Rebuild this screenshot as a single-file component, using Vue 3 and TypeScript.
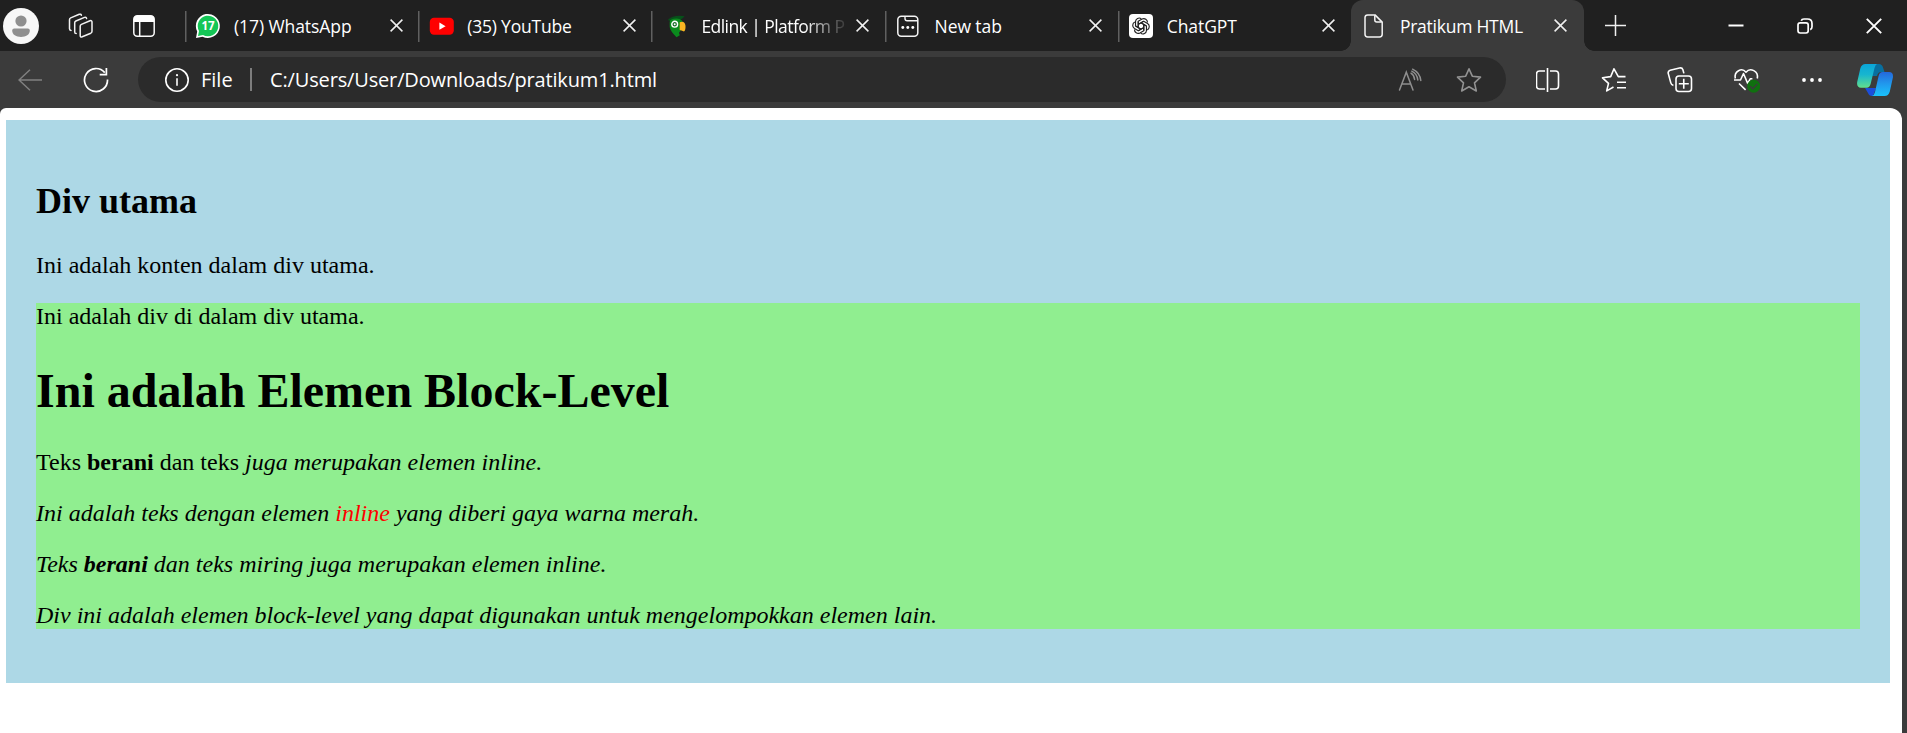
<script setup lang="ts">
interface Tab {
  id: string
  title: string
  cls: string
}

const tabs: Tab[] = [
  { id: 'whatsapp', title: '(17) WhatsApp', cls: 't-wa' },
  { id: 'youtube', title: '(35) YouTube', cls: 't-yt' },
  { id: 'edlink', title: 'Edlink | Platform P', cls: 't-ed' },
  { id: 'newtab', title: 'New tab', cls: 't-nt' },
  { id: 'chatgpt', title: 'ChatGPT', cls: 't-gpt' },
  { id: 'file', title: 'Pratikum HTML', cls: 't-file' },
]
const activeId = 'file'
const petals: number[] = [0, 60, 120, 180, 240, 300]
</script>

<template>
  <div class="browser">
    <header class="tabbar">
      <div class="lead">
        <svg class="avatar" viewBox="0 0 36 36" width="36" height="36">
          <circle cx="18" cy="18" r="18" fill="#f7f7f7" />
          <circle cx="18" cy="13" r="5.600" fill="#8f8f8f" />
          <path d="M9.2 22.600q0-2 2-2h13.600q2 0 2 2c0 4.300-4 6.400-8.800 6.400s-8.800-2.100-8.800-6.400z" fill="#8f8f8f" />
        </svg>
        <svg class="spaces" viewBox="0 0 26 26" width="26" height="26" fill="none" stroke="#f2f2f2" stroke-width="1.500" stroke-linejoin="round" stroke-linecap="round">
          <path d="M12.200 13.200q0-1.300 1.200-1.800l8.600-3.600q2-.7 2 1.300v9.200q0 1.300-1.200 1.900l-8.600 3.600q-2 .7-2-1.300z" />
          <path d="M8.200 20.600q-1.500 0-1.500-1.600v-9.200q0-1.300 1.200-1.800l8.600-3.600q1.800-.6 2.100 1.100" />
          <path d="M3 17.400q-1.500-.1-1.500-1.600V6.700q0-1.300 1.200-1.800l8.600-3.600q1.700-.6 2.100.9" />
        </svg>
        <svg class="vertical" viewBox="0 0 22 22" width="22" height="22">
          <rect x=".8" y=".8" width="20.400" height="20.400" rx="3.500" fill="none" stroke="#fafafa" stroke-width="1.500" />
          <path d="M.8 7V4Q.8.8 4 .8h14q3.200 0 3.200 3.200v3z" fill="#fff" />
          <path d="M6.700 7v14" stroke="#fafafa" stroke-width="1.500" />
        </svg>
      </div>

      <div v-for="tab in tabs" :key="tab.id" class="tab" :class="{ active: tab.id === activeId }">
        <svg v-if="tab.id === 'whatsapp'" class="fav" viewBox="0 0 24 24">
          <path d="M0 24l1.200-6.500A12 12 0 1 1 6.500 22.700z" fill="#fff" />
          <path d="M2 22l1-5A10.300 10.300 0 1 1 7 21z" fill="#14c656" />
          <text x="12" y="16.200" text-anchor="middle" font-family="Open Sans, sans-serif" font-size="11.500" font-weight="700" fill="#fff">17</text>
        </svg>
        <svg v-else-if="tab.id === 'youtube'" class="fav" viewBox="-0.8 0 24 24">
          <rect x="0" y="3.700" width="24" height="17" rx="4.200" fill="#f00" />
          <path d="M9.600 8.600v7.200l6.200-3.600z" fill="#fff" />
        </svg>
        <svg v-else-if="tab.id === 'edlink'" class="fav" viewBox="-0.7 0 24 24">
          <path d="M5 6Q11 .5 22 2.300L19 5l-8 3.500z" fill="#07501a" />
          <path d="M7 8Q7 4.800 14 4.500q6.500.3 6.500 6.500c0 3.500-3 5.500-4.200 8l.8 2.200-3.300 2Q7.500 17 7 13z" fill="#0a8a1d" />
          <path d="M17 8.200q5-2 5.800 3.500.2 4.600-1.500 5.800-3-1.500-4.300-1.500z" fill="#f9b522" />
          <circle cx="12" cy="10.200" r="2.900" fill="#176b27" stroke="#fff" stroke-width="1.400" />
          <circle cx="12" cy="10.200" r="1" fill="#fff" />
        </svg>
        <svg v-else-if="tab.id === 'newtab'" class="fav" viewBox="0 0 24 24">
          <rect x="1.800" y="2.300" width="20" height="20" rx="3.500" fill="none" stroke="#f4f4f4" stroke-width="1.500" />
          <path d="M9 2.300v2.200q0 2.200 2.200 2.200h10.600" fill="none" stroke="#f4f4f4" stroke-width="1.400" />
          <g fill="#fff"><circle cx="6.800" cy="13.500" r="1.450" /><circle cx="11.800" cy="13.500" r="1.450" /><circle cx="16.800" cy="13.500" r="1.450" /></g>
        </svg>
        <svg v-else-if="tab.id === 'chatgpt'" class="fav" viewBox="0 0 24 24">
          <rect width="24" height="24" rx="4" fill="#fff" />
          <g fill="none" stroke="#222" stroke-width="1.150" stroke-linejoin="round">
            <path
              v-for="angle in petals"
              :key="angle"
              :transform="`rotate(${angle} 12 12)`"
              d="M9.200 13.600V7.300l3.900-2.250a3.700 3.700 0 0 1 5.400 3.500M9.200 10.400l5.400-3.100"
            />
          </g>
        </svg>
        <svg v-else class="fav" viewBox="0.5 0 24 24" fill="none" stroke="#f4f4f4" stroke-width="1.500" stroke-linejoin="round">
          <path d="M6.200.9h7.300l7.200 7.200v12.200q0 2.700-2.700 2.700H6.200q-2.700 0-2.700-2.700V3.600Q3.500.9 6.200.9z" />
          <path d="M13.300 1.200v4.900q0 2 2 2h5" />
        </svg>
        <span class="title" :class="tab.cls">{{ tab.title }}</span>
        <svg class="x" viewBox="0 0 13 13" width="13" height="13">
          <path d="M.6.6l11.800 11.800M12.400.6L.6 12.400" stroke="#f0f0f0" stroke-width="1.500" />
        </svg>
      </div>

      <svg class="plus" viewBox="0 0 21 21" width="21" height="21">
        <path d="M10.500 0v21M0 10.500h21" stroke="#f0f0f0" stroke-width="1.500" />
      </svg>

      <div class="controls">
        <svg viewBox="0 0 16 16" width="16" height="16"><path d="M.5 7.500h15" stroke="#fff" stroke-width="2" /></svg>
        <svg viewBox="0 0 16 16" width="16" height="16" fill="none" stroke="#fff" stroke-width="1.700">
          <rect x="1" y="4.800" width="10.200" height="10.200" rx="2.200" />
          <path d="M4.300 2.800Q4.700 1 7 1h3.400q4.600 0 4.600 4.600v3.200q0 2.300-1.800 2.800" />
        </svg>
        <svg viewBox="0 0 16 16" width="16" height="16"><path d="M.8.800l14.400 14.400M15.200.8L.8 15.200" stroke="#fff" stroke-width="1.900" /></svg>
      </div>
    </header>

    <nav class="toolbar">
      <svg class="back" viewBox="0 0 24 22" width="24" height="22" fill="none" stroke="#818181" stroke-width="1.500">
        <path d="M12 .7L1 11l11 10.300M1 11h23" />
      </svg>
      <svg class="reload" viewBox="0 0 26 26" width="26" height="26" fill="none" stroke="#fff" stroke-width="1.700">
        <path d="M24.500 12.500A11.500 11.500 0 1 1 21.800 5.600" />
        <path d="M23.400 1v6.700h-6.700" />
      </svg>
      <div class="omnibox">
        <svg class="info" viewBox="0 0 24 24" width="24" height="24">
          <circle cx="12" cy="12" r="11.200" fill="none" stroke="#fff" stroke-width="1.600" />
          <circle cx="12" cy="7.200" r="1.100" fill="#fff" />
          <path d="M12 10.200v7.600" stroke="#fff" stroke-width="1.600" />
        </svg>
        <span class="scheme">File</span>
        <i class="bar"></i>
        <span class="url">C:/Users/User/Downloads/pratikum1.html</span>
        <svg class="aloud" viewBox="0 0 24 24" width="24" height="24" fill="none" stroke="#8f8f8f" stroke-width="1.500" stroke-linecap="round">
          <path d="M1.500 22L8.300 4.200 15 22M4 16h8.800" />
          <path d="M13 5.200q3.200 2 3.600 6.300M14.600 1.200q7.400 3.600 8.200 11.300" />
          <path d="M13.800 3.200q5.400 2.700 6 8.800" />
        </svg>
        <svg class="star" viewBox="0 0 26 26" width="26" height="26" fill="none" stroke="#929292" stroke-width="1.600" stroke-linejoin="round">
          <path d="M13 1.800l3.300 7.400 8.200.9-6 5.700 1.800 8.200-7.300-4.200L5.700 24l1.800-8.200-6-5.700 8.200-.9z" />
        </svg>
      </div>
      <div class="actions">
        <span class="cell">
          <svg viewBox="0.500 0 24 24" width="24" height="24" fill="none" stroke="#fff" stroke-width="1.600">
            <path d="M12 0v24M9.500 3H4Q1 3 1 6v12q0 3 3 3h5.500M14.500 3H20q3 0 3 3v12q0 3-3 3h-5.500" />
          </svg>
        </span>
        <span class="cell">
          <svg viewBox="0 0 26 26" width="26" height="26" fill="none" stroke="#fff" stroke-width="1.600" stroke-linejoin="round">
            <path d="M24.500 9.600h-7.200L13 1.800 9.700 9.600l-8.200 1.200 6 5.600-1.800 7.500 6.800-3.900M16 15.200h9M16 20.700h9" />
          </svg>
        </span>
        <span class="cell">
          <svg viewBox="0 0 26 26" width="26" height="26" fill="none" stroke="#fff" stroke-width="1.600" stroke-linejoin="round">
            <rect x="9" y="9" width="15.500" height="15.500" rx="3" />
            <path d="M16.750 11.800v10M11.800 16.750h10M6.400 18.400q-2-.3-2.600-2.500L1.300 6.600q-.7-2.600 1.800-3.400L12.500 1q2.600-.6 3.400 1.800l1 3.600" />
          </svg>
        </span>
        <span class="cell">
          <svg viewBox="-1 0 28 28" width="28" height="28" fill="none" stroke="#fff" stroke-width="1.600" stroke-linejoin="round">
            <path d="M2.300 12.500C.8 5.300 8.800 1 13 6.200c4.200-5.200 12.800-1 11.300 6.300M1 14h6.500l3-6.500 4.200 10 2.500-4.700h2.200M6 17.500l6.600 6.400" />
            <circle cx="20.700" cy="20.200" r="6.500" fill="#0f700f" stroke="none" />
            <path d="M17.200 20.200l2.500 2.600 4.600-4.800" stroke="#3b3b3b" stroke-width="1.500" />
          </svg>
        </span>
        <span class="cell">
          <svg viewBox="0 0 24 24" width="24" height="24" fill="#fff">
            <circle cx="4" cy="12" r="1.900" /><circle cx="12" cy="12" r="1.900" /><circle cx="20" cy="12" r="1.900" />
          </svg>
        </span>
        <span class="cell last">
          <svg viewBox="0 0 36 32" width="36" height="32">
            <defs>
              <linearGradient id="cpA" x1="0" y1="0" x2="0" y2="1">
                <stop offset="0" stop-color="#0aa5d8" /><stop offset=".45" stop-color="#17b6cf" /><stop offset="1" stop-color="#62df8d" />
              </linearGradient>
              <linearGradient id="cpB" x1="0" y1="0" x2="0" y2="1">
                <stop offset="0" stop-color="#2468dc" /><stop offset=".5" stop-color="#2199ed" /><stop offset="1" stop-color="#1ac2fb" />
              </linearGradient>
            </defs>
            <path d="M17 0h5q3 0 4 3.500L27.500 8H24q-3 0-4 4H15z" fill="#086f9f" />
            <path d="M8 24h11l-3 8h-1q-3 0-4-3z" fill="#1b4edc" />
            <path d="M8.500 0H20q-1.500.5-2.500 4L13.600 20q-.9 3.700-4 3.700H4Q-.6 23.700.2 18L3.300 4.500Q4.500 0 8.500 0z" fill="url(#cpA)" />
            <path d="M25.500 8H32q4.600 0 3.900 5.500L32.800 27.500Q31.500 32 27.500 32H15q2-.4 3-4l3.600-16q.9-4 3.900-4z" fill="url(#cpB)" />
          </svg>
        </span>
      </div>
    </nav>

    <div class="viewport">
      <main class="page">
        <section class="outer">
          <h2>Div utama</h2>
          <p>Ini adalah konten dalam div utama.</p>
          <div class="inner">
            <div class="line">Ini adalah div di dalam div utama.</div>
            <h1>Ini adalah Elemen Block-Level</h1>
            <p>Teks <strong>berani</strong> dan teks <em>juga merupakan elemen inline.</em></p>
            <p><em>Ini adalah teks dengan elemen <span class="red">inline</span> yang diberi gaya warna merah.</em></p>
            <p><em>Teks <strong>berani</strong> dan teks miring juga merupakan elemen inline.</em></p>
            <p><em>Div ini adalah elemen block-level yang dapat digunakan untuk mengelompokkan elemen lain.</em></p>
          </div>
        </section>
      </main>
    </div>
  </div>
</template>

<style>
body {
  margin: 0;
  overflow: hidden;
}
</style>

<style scoped>
.browser {
  display: flex;
  flex-direction: column;
  width: 1907px;
  height: 733px;
  overflow: hidden;
  background: #3b3b3b;
  font-family: 'Open Sans', 'Noto Sans', sans-serif;
}
svg {
  display: block;
  flex: none;
}
.tabbar {
  display: flex;
  align-items: center;
  flex: none;
  height: 51px;
  background: #202020;
  color: #fff;
}
.lead {
  display: flex;
  align-items: center;
  width: 185px;
  flex: none;
}
.avatar {
  margin-left: 3px;
}
.spaces {
  margin-left: 29px;
}
.vertical {
  margin-left: 39px;
}
.tab {
  display: flex;
  align-items: center;
  box-sizing: border-box;
  width: 233.200px;
  height: 51px;
  flex: none;
  padding: 0 15.500px 0 11px;
  background: linear-gradient(#606060, #606060) 0 11px / 1.500px 31px no-repeat;
}
.fav {
  width: 24px;
  height: 24px;
  overflow: visible;
}
.title {
  flex: 1;
  min-width: 0;
  margin: 0 5px 0 14px;
  font-size: 17.500px;
  line-height: 24px;
  letter-spacing: -0.08px;
  white-space: nowrap;
}
.t-yt {
  letter-spacing: -0.2px;
}
.t-ed {
  letter-spacing: -0.56px;
  padding-left: 1px;
  -webkit-mask-image: linear-gradient(90deg, #000 104px, rgba(0, 0, 0, 0.150) 142px);
  mask-image: linear-gradient(90deg, #000 104px, rgba(0, 0, 0, 0.150) 142px);
}
.t-nt {
  padding-left: 1px;
}
.t-file {
  letter-spacing: -0.25px;
}
.tab.active {
  position: relative;
  padding-right: 17px;
  background: #3b3b3b;
  border-radius: 12px 12px 0 0;
}
.tab.active::before,
.tab.active::after {
  content: '';
  position: absolute;
  bottom: 0;
  width: 10px;
  height: 10px;
}
.tab.active::before {
  left: -10px;
  background: radial-gradient(circle at 0 0, transparent 9.500px, #3b3b3b 10px);
}
.tab.active::after {
  right: -10px;
  background: radial-gradient(circle at 100% 0, transparent 9.500px, #3b3b3b 10px);
}
.plus {
  margin-left: 21px;
}
.controls {
  display: flex;
  gap: 53px;
  margin-left: auto;
  margin-right: 25.500px;
}
.toolbar {
  display: flex;
  align-items: center;
  flex: none;
  height: 57px;
  color: #fff;
}
.back {
  margin-left: 18px;
}
.reload {
  margin-left: 41px;
}
.omnibox {
  display: flex;
  align-items: center;
  box-sizing: border-box;
  width: 1368px;
  height: 45px;
  margin-left: 29px;
  padding: 0 24px 0 27px;
  border-radius: 23px;
  background: #2b2b2b;
  flex: none;
}
.scheme {
  width: 49px;
  margin-left: 12px;
  font-size: 20px;
}
.bar {
  width: 1.500px;
  height: 23px;
  background: #7d7d7d;
}
.url {
  flex: 1;
  margin-left: 18.500px;
  font-size: 20px;
  letter-spacing: -0.15px;
  white-space: nowrap;
}
.star {
  margin-left: 34px;
}
.actions {
  display: flex;
  margin-left: 8.500px;
}
.cell {
  display: flex;
  align-items: center;
  justify-content: center;
  width: 66px;
  height: 45px;
}
.last {
  width: 61px;
}
.viewport {
  flex: 1;
  display: flex;
  min-height: 0;
}
.page {
  width: 1902px;
  box-sizing: border-box;
  padding: 12px 12px 0 6px;
  background: #fff;
  border-radius: 6px 12px 0 0;
  color: #000;
  font-family: 'Liberation Serif', 'Times New Roman', serif;
  font-size: 24px;
  line-height: 27px;
}
.outer {
  height: 503px;
  padding: 30px;
  background: #add8e6;
}
.inner {
  background: #90ee90;
}
h2 {
  margin: 30px 0;
  font-size: 36px;
  line-height: 42px;
}
h1 {
  margin: 33px 0 31px;
  font-size: 48px;
  line-height: 55px;
}
p {
  margin: 24px 0;
}
.red {
  color: red;
}
</style>
